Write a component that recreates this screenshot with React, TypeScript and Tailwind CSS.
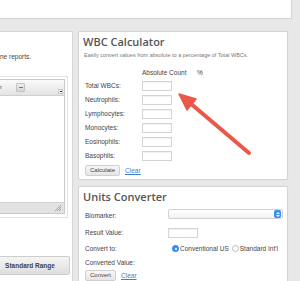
import React from "react"

const rows = ["Total WBCs:", "Neutrophils:", "Lymphocytes:", "Monocytes:", "Eosinophils:", "Basophils:"]

function SmallButton({ children }: { children: React.ReactNode }) {
    return (
        <button className="h-[11px] px-[4px] rounded-[2px] border border-[#cfcfcf] bg-gradient-to-b from-[#f7f7f7] to-[#e6e6e6] text-[6px] leading-[9px] text-[#444]">
            {children}
        </button>
    )
}

function ClearLink() {
    return <a className="text-[6.5px] text-[#3b7fd0] underline">Clear</a>
}

function Input({ w = "w-[30px]" }: { w?: string }) {
    return <div className={`${w} h-[10px] bg-white border border-[#d4d4d4] shadow-[inset_0_1px_1px_rgba(0,0,0,0.06)]`} />
}

export default function App() {
    return (
        <div className="relative w-[300px] h-[281px] overflow-hidden bg-[#e8e8e8] font-['Liberation_Sans',Arial,sans-serif] text-[#333]">
            {/* top strip */}
            <div className="h-[19px] w-[292px] bg-white border-b border-r border-[#d3d3d3]" />

            <div className="flex mt-[12px]">
                {/* left column, clipped */}
                <div className="w-[73px] h-[260px] bg-white border-t border-r border-[#d6d6d6] overflow-hidden flex flex-col">
                    <p className="mt-[21px] text-[6.5px] leading-[8px] text-[#444] whitespace-nowrap">ne reports.</p>

                    <div className="mt-[15px] w-[68px] border border-l-0 border-[#e2e2e2] pt-[2px] pr-[2px] pb-[3px]">
                        <div className="w-[65px] border border-l-0 border-[#c9c9c9]">
                            <div className="h-[16px] bg-gradient-to-b from-[#fafafa] to-[#e3e3e3] border-b border-[#cfcfcf] relative">
                                <span className="absolute left-0 top-[4px] text-[6px] leading-[7px] text-[#555]">r</span>
                                <div className="absolute left-[16px] top-[3px] w-[9px] h-[9px] rounded-[1px] border border-[#c2c2c2] bg-gradient-to-b from-[#eee] to-[#d6d6d6] flex items-center justify-center">
                                    <div className="w-[4px] h-[1px] bg-[#777]" />
                                </div>
                                <div className="absolute left-[58px] top-[9px] w-[5px] h-[5px] border border-[#c8c8c8] bg-[#f3f3f3] flex items-center justify-center">
                                    <div className="w-[2px] h-[1px] bg-[#333]" />
                                </div>
                            </div>
                            <div className="h-[106px] bg-white" />
                            <div className="h-[11px] bg-[#e2e2e2] border-t border-[#d0d0d0] relative">
                                <svg className="absolute right-[3px] bottom-[2px]" width="6" height="6" viewBox="0 0 6 6">
                                    <path d="M6 0 L0 6 M6 2 L2 6 M6 4 L4 6" stroke="#999" strokeWidth="0.8" />
                                </svg>
                            </div>
                        </div>
                    </div>

                    <div className="mt-[38px] flex justify-end w-[70px]">
                        <button className="shrink-0 w-[80px] h-[19px] border border-[#cdcdcd] rounded-[2px] bg-gradient-to-b from-[#f5f5f5] to-[#dedede] text-[6.5px] font-bold text-[#444] leading-[17px]">
                            Standard Range
                        </button>
                    </div>
                </div>

                {/* right column */}
                <div className="ml-[5px] w-[210px] flex flex-col gap-[6px]">
                    {/* WBC Calculator */}
                    <div className="h-[149px] bg-white border border-[#d4d4d4] rounded-[2px] shadow-[0_0_1px_rgba(0,0,0,0.1)] px-[4px] pt-[3px]">
                        <h2 className="font-['Open_Sans',sans-serif] font-semibold text-[11px] leading-[14px] text-[#555]">WBC Calculator</h2>
                        <p className="mt-[2px] pl-[1px] text-[5.5px] leading-[8px] text-[#777]">
                            Easily convert values from absolute to a percentage of Total WBCs.
                        </p>
                        <div className="mt-[10px] pl-[2px] flex text-[6.5px] leading-[8px] text-[#444]">
                            <span className="w-[57px]" />
                            <span className="w-[55px]">Absolute Count</span>
                            <span>%</span>
                        </div>
                        <div className="mt-[2px] pl-[2px] flex flex-col">
                            {rows.map((r) => (
                                <div key={r} className="h-[14px] flex items-center">
                                    <span className="w-[57px] text-[6.5px] text-[#444]">{r}</span>
                                    <Input w="w-[30px]" />
                                </div>
                            ))}
                        </div>
                        <div className="mt-[2px] pl-[2px] flex items-center gap-[5px]">
                            <SmallButton>Calculate</SmallButton>
                            <ClearLink />
                        </div>
                    </div>

                    {/* Units Converter */}
                    <div className="h-[110px] bg-white border border-[#d4d4d4] rounded-[2px] shadow-[0_0_1px_rgba(0,0,0,0.1)] px-[4px] pt-[3px]">
                        <h2 className="font-['Open_Sans',sans-serif] font-semibold text-[11px] leading-[14px] text-[#555]">Units Converter</h2>
                        <div className="pl-[2px] text-[6.5px] text-[#444]">
                            <div className="h-[20px] flex items-center">
                                <span className="w-[83px] pt-[3px]">Biomarker:</span>
                                <div className="w-[115px] h-[10px] rounded-[2px] border border-[#d0d0d0] bg-gradient-to-b from-white to-[#f3f3f3] flex justify-end items-center pr-[1px]">
                                    <div className="w-[7px] h-[8px] rounded-[2px] bg-[#3a8ef2] flex flex-col items-center justify-center gap-[1px]">
                                        <svg width="4" height="2" viewBox="0 0 4 2"><path d="M0 2 L2 0 L4 2Z" fill="#fff" /></svg>
                                        <svg width="4" height="2" viewBox="0 0 4 2"><path d="M0 0 L2 2 L4 0Z" fill="#fff" /></svg>
                                    </div>
                                </div>
                            </div>
                            <div className="h-[16px] flex items-center mt-[1px]">
                                <span className="w-[83px]">Result Value:</span>
                                <Input w="w-[30px]" />
                            </div>
                            <div className="h-[15px] flex items-center">
                                <span className="w-[87px]">Convert to:</span>
                                <span className="w-[7px] h-[7px] rounded-full bg-[#3a8ef2] flex items-center justify-center">
                                    <span className="w-[2px] h-[2px] rounded-full bg-white" />
                                </span>
                                <span className="ml-[1px]">Conventional US</span>
                                <span className="ml-[3px] w-[7px] h-[7px] rounded-full border border-[#bbb] bg-white" />
                                <span className="ml-[1px]">Standard Int'l</span>
                            </div>
                            <div className="h-[14px] flex items-center">
                                <span>Converted Value:</span>
                            </div>
                            <div className="flex items-center gap-[5px]">
                                <SmallButton>Convert</SmallButton>
                                <ClearLink />
                            </div>
                        </div>
                    </div>
                </div>
            </div>

            {/* annotation arrow */}
            <svg className="absolute left-0 top-0 pointer-events-none" width="300" height="281" viewBox="0 0 300 281">
                <line x1="249" y1="153" x2="190" y2="103" stroke="#ea5848" strokeWidth="4" strokeLinecap="round" />
                <polygon points="179,94 196,99 187,110" fill="#ea5848" stroke="#ea5848" strokeWidth="1.5" strokeLinejoin="round" />
            </svg>
        </div>
    )
}
